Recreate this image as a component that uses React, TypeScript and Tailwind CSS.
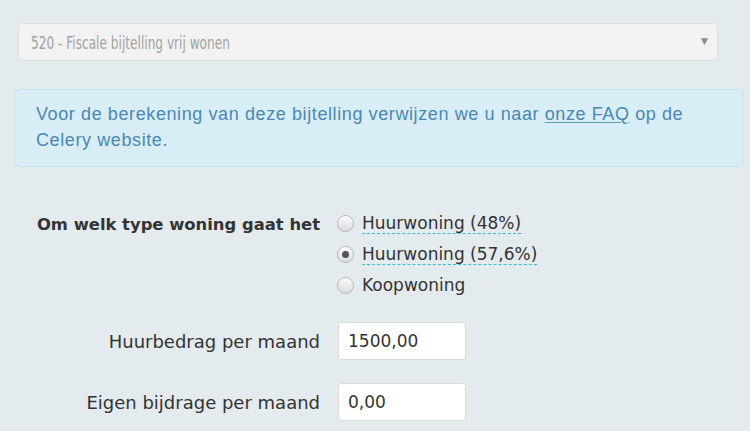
import React, { useState } from "react";

const options = ["Huurwoning (48%)", "Huurwoning (57,6%)", "Koopwoning"];

const Radio = ({ checked }: { checked: boolean }) => (
  <span className="flex h-[17px] w-[17px] shrink-0 items-center justify-center rounded-full border border-[#b5b5b5] bg-gradient-to-b from-[#fafafa] to-[#dcdcdc] shadow-[inset_0_1px_1px_rgba(255,255,255,0.8)]">
    {checked && <span className="h-[7px] w-[7px] rounded-full bg-[#555]" />}
  </span>
);

const App = () => {
  const [type, setType] = useState(1);
  const [rent, setRent] = useState("1500,00");
  const [own, setOwn] = useState("0,00");

  return (
    <div className="min-h-[431px] w-[750px] bg-[#e3ebee] pt-[23px] font-['DejaVu_Sans',Verdana,sans-serif] text-[#333]">
      <div className="ml-[18px] flex h-[38px] w-[700px] items-center justify-between rounded-[4px] border border-[#dedede] bg-[#f2f2f2] pl-[12px] pr-[9px]">
        <span className="inline-block origin-left scale-x-[0.75] whitespace-nowrap font-['DejaVu_Sans_Condensed',sans-serif] text-[18px] text-[#a3a3a3]">
          520 - Fiscale bijtelling vrij wonen
        </span>
        <span className="text-[9px] text-[#888]">▼</span>
      </div>

      <div className="ml-[15px] mt-[28px] w-[729px] rounded-[4px] border border-[#c4e6f0] bg-[#d9edf7] px-[20px] pb-[13px] pt-[11px] font-['Liberation_Sans',Arial,sans-serif] text-[18px] leading-[26px] tracking-[0.6px] text-[#4a88b2]">
        <p>
          Voor de berekening van deze bijtelling verwijzen we u naar{" "}
          <a href="#" className="text-[#4a88b2] underline decoration-[#5b9fb0] underline-offset-2">
            onze FAQ
          </a>{" "}
          op de Celery website.
        </p>
      </div>

      <div className="mt-[45px] flex flex-col">
        <div className="flex">
          <div className="w-[320px] pt-[1px] text-right text-[16.4px] font-bold">Om welk type woning gaat het</div>
          <div className="ml-[17px] flex flex-col gap-[9px]">
            {options.map((o, i) => (
              <label key={o} className="flex h-[22px] cursor-pointer items-center gap-[8px]" onClick={() => setType(i)}>
                <Radio checked={type === i} />
                <span
                  className={`text-[17px] leading-[20px] ${
                    i < 2 ? "border-b border-dashed border-[#3cbfc4]" : ""
                  }`}
                >
                  {o}
                </span>
              </label>
            ))}
          </div>
        </div>

        <div className="mt-[26px] flex items-center">
          <div className="w-[320px] text-right text-[18px]">Huurbedrag per maand</div>
          <input
            value={rent}
            onChange={(e) => setRent(e.target.value)}
            className="ml-[18px] h-[38px] w-[128px] rounded-[3px] border border-[#dcdcdc] bg-white px-[9px] text-[17px] text-[#333] outline-none"
          />
        </div>

        <div className="mt-[23px] flex items-center">
          <div className="w-[320px] text-right text-[18px]">Eigen bijdrage per maand</div>
          <input
            value={own}
            onChange={(e) => setOwn(e.target.value)}
            className="ml-[18px] h-[38px] w-[128px] rounded-[3px] border border-[#dcdcdc] bg-white px-[9px] text-[17px] text-[#333] outline-none"
          />
        </div>
      </div>
    </div>
  );
};

export default App;
